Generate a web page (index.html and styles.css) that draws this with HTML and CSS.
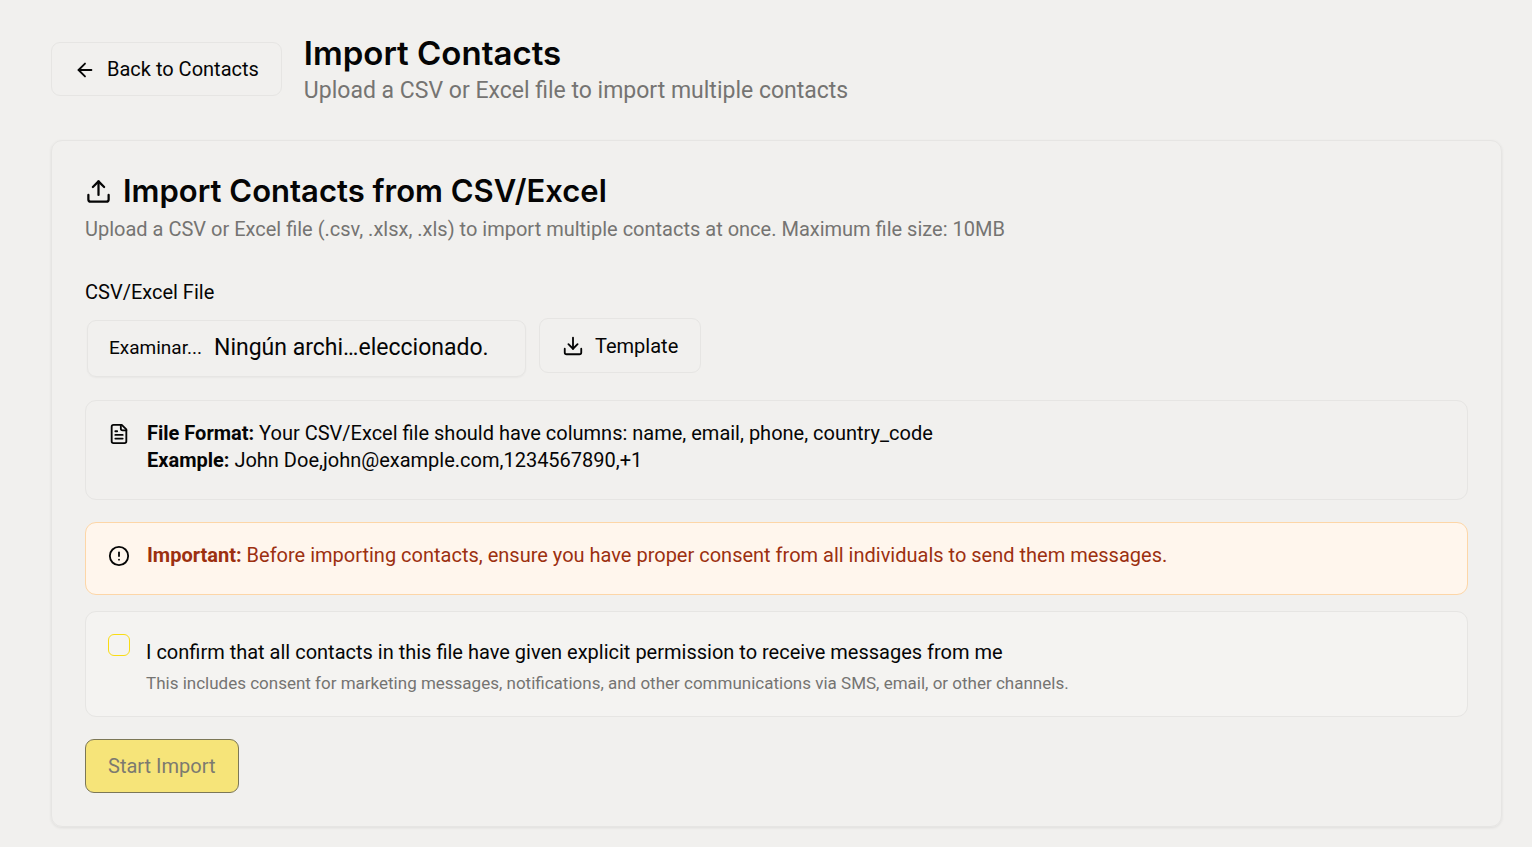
FILE: index.html
```html
<!DOCTYPE html>
<html lang="en">
<head>
<meta charset="utf-8">
<meta name="viewport" content="width=device-width, initial-scale=1">
<title>Import Contacts</title>
<link rel="stylesheet" href="styles.css">
</head>
<body>
<main class="page">
  <header class="page-header">
    <a class="button back" href="#contacts">
      <svg class="icon" viewBox="0 0 24 24" aria-hidden="true"><path d="m12 19-7-7 7-7"/><path d="M19 12H5"/></svg>
      Back to Contacts
    </a>
    <div>
      <h1 class="page-title">Import Contacts</h1>
      <p class="page-subtitle">Upload a CSV or Excel file to import multiple contacts</p>
    </div>
  </header>

  <section class="card">
    <h2 class="card-title">
      <svg class="icon icon-large" viewBox="0 0 24 24" aria-hidden="true"><path d="M21 15v4a2 2 0 0 1-2 2H5a2 2 0 0 1-2-2v-4"/><path d="m17 8-5-5-5 5"/><path d="M12 3v12"/></svg>
      Import Contacts from CSV/Excel
    </h2>
    <p class="card-description">Upload a CSV or Excel file (.csv, .xlsx, .xls) to import multiple contacts at once. Maximum file size: 10MB</p>

    <form class="form">
      <div class="field">
        <label class="field-label" for="file">CSV/Excel File</label>
        <div class="field-row">
          <input class="file-input" type="file" id="file" accept=".csv,.xlsx,.xls">
          <label class="file-picker" for="file">
            <span class="file-browse">Examinar...</span>
            <span class="file-name">Ningún archi…eleccionado.</span>
          </label>
          <button class="button template" type="button">
            <svg class="icon" viewBox="0 0 24 24" aria-hidden="true"><path d="M21 15v4a2 2 0 0 1-2 2H5a2 2 0 0 1-2-2v-4"/><path d="m7 10 5 5 5-5"/><path d="M12 15V3"/></svg>
            Template
          </button>
        </div>
      </div>

      <div class="notice format">
        <svg class="icon notice-icon" viewBox="0 0 24 24" aria-hidden="true"><path d="M15 2H6a2 2 0 0 0-2 2v16a2 2 0 0 0 2 2h12a2 2 0 0 0 2-2V7Z"/><path d="M14 2v4a2 2 0 0 0 2 2h4"/><path d="M10 9H8"/><path d="M16 13H8"/><path d="M16 17H8"/></svg>
        <p class="notice-text"><strong>File Format:</strong> Your CSV/Excel file should have columns: name, email, phone, country_code<br><strong>Example:</strong> John Doe,john@example.com,1234567890,+1</p>
      </div>

      <div class="notice warning">
        <svg class="icon notice-icon" viewBox="0 0 24 24" aria-hidden="true"><circle cx="12" cy="12" r="10"/><path d="M12 8v4"/><path d="M12 16h.01"/></svg>
        <p class="notice-text"><strong>Important:</strong> Before importing contacts, ensure you have proper consent from all individuals to send them messages.</p>
      </div>

      <div class="consent">
        <input class="checkbox" type="checkbox" id="consent" aria-describedby="consent-note">
        <div class="consent-body">
          <label class="consent-label" for="consent">I confirm that all contacts in this file have given explicit permission to receive messages from me</label>
          <p class="consent-note" id="consent-note">This includes consent for marketing messages, notifications, and other communications via SMS, email, or other channels.</p>
        </div>
      </div>

      <button class="button submit" type="submit" disabled>Start Import</button>
    </form>
  </section>
</main>
</body>
</html>
```

FILE: styles.css
```css
* {
  box-sizing: border-box;
}

body {
  margin: 0;
  background: #f1f0ee;
  color: #050505;
  font-family: Roboto, "Liberation Sans", Arial, sans-serif;
  font-size: 20px;
  line-height: 27px;
}

h1, h2, p {
  margin: 0;
}

.page {
  padding: 32px 30px 20px 51px;
}

.page-header {
  display: flex;
  align-items: center;
  gap: 22px;
  margin-bottom: 34px;
}

.page-title {
  font-family: Inter, sans-serif;
  font-size: 33px;
  font-weight: 600;
  line-height: 43px;
}

.page-subtitle {
  color: #757472;
  font-size: 23px;
  line-height: 31px;
}

.icon {
  width: 22px;
  height: 22px;
  flex: none;
  fill: none;
  stroke: currentColor;
  stroke-width: 2;
  stroke-linecap: round;
  stroke-linejoin: round;
}

.icon-large {
  width: 27px;
  height: 27px;
}

.button {
  display: inline-flex;
  align-items: center;
  gap: 11px;
  min-height: 54px;
  padding: 1px 22px 0;
  border: 1px solid #e6e5e3;
  border-radius: 9px;
  background: transparent;
  color: inherit;
  font: inherit;
  text-decoration: none;
  white-space: nowrap;
}

.card {
  padding: 32px 33px 33px;
  border: 1px solid #e6e5e3;
  border-radius: 11px;
  box-shadow: 0 1px 3px rgb(0 0 0 / 8%);
}

.card-title {
  display: flex;
  align-items: center;
  gap: 11px;
  font-family: Inter, sans-serif;
  font-size: 31px;
  font-weight: 600;
  line-height: 36px;
}

.card-description {
  margin-top: 7px;
  color: #757472;
}

.form {
  display: flex;
  flex-direction: column;
  margin-top: 36px;
}

.field-label {
  display: block;
  margin-bottom: 12px;
}

.field-row {
  position: relative;
  display: flex;
  align-items: flex-start;
  gap: 13px;
  padding-left: 2px;
}

.file-input {
  position: absolute;
  width: 1px;
  height: 1px;
  opacity: 0;
}

.file-picker {
  display: flex;
  align-items: center;
  gap: 12px;
  width: 439px;
  height: 57px;
  margin: 2px 0 1px;
  padding: 0 21px 2px;
  border: 1px solid #e6e5e3;
  border-radius: 9px;
  box-shadow: 0 1px 2px rgb(0 0 0 / 4%);
  white-space: nowrap;
}

.file-browse {
  font-size: 19px;
}

.file-name {
  font-size: 23px;
}

.template {
  min-height: 55px;
}

.notice {
  display: flex;
  gap: 17px;
  margin-top: 22px;
  padding: 19px 22px;
  border: 1px solid #e6e5e3;
  border-radius: 11px;
}

.notice-icon {
  margin-top: 3px;
}

.format {
  min-height: 100px;
}

.warning {
  min-height: 73px;
  border-color: #fdd6a7;
  background: #fff6ed;
}

.warning .notice-text {
  color: #9c3010;
}

.consent {
  display: flex;
  gap: 16px;
  margin-top: 16px;
  padding: 22px 22px 19px;
  border: 1px solid #e6e5e3;
  border-radius: 11px;
  background: #f4f3f1;
}

.checkbox {
  appearance: none;
  flex: none;
  width: 22px;
  height: 22px;
  margin: 0;
  border: 1px solid #f9dc14;
  border-radius: 6px;
}

.checkbox:checked {
  background: #f9dc14;
}

.consent-label {
  display: block;
  margin-top: 5px;
}

.consent-note {
  margin-top: 4px;
  color: #757472;
  font-size: 17px;
}

.submit {
  align-self: flex-start;
  margin-top: 22px;
  border-color: #7c7756;
  background: #f6e479;
  color: #7c7a70;
}
```
